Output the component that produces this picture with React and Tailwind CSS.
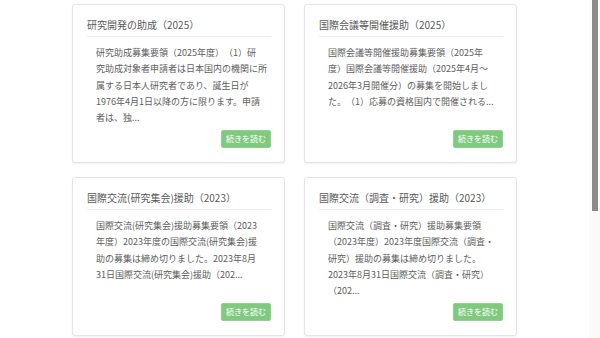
import React from "react";

const cards = [
  {
    title: "研究開発の助成（2025）",
    lines: [
      "研究助成募集要領（2025年度）（1）研",
      "究助成対象者申請者は日本国内の機関に所",
      "属する日本人研究者であり、誕生日が",
      "1976年4月1日以降の方に限ります。申請",
      "者は、独...",
    ],
  },
  {
    title: "国際会議等開催援助（2025）",
    lines: [
      "国際会議等開催援助募集要領（2025年",
      "度）国際会議等開催援助（2025年4月～",
      "2026年3月開催分）の募集を開始しまし",
      "た。（1）応募の資格国内で開催される...",
    ],
  },
  {
    title: "国際交流(研究集会)援助（2023）",
    lines: [
      "国際交流(研究集会)援助募集要領（2023",
      "年度）2023年度の国際交流(研究集会)援",
      "助の募集は締め切りました。2023年8月",
      "31日国際交流(研究集会)援助（202...",
    ],
  },
  {
    title: "国際交流（調査・研究）援助（2023）",
    lines: [
      "国際交流（調査・研究）援助募集要領",
      "（2023年度）2023年度国際交流（調査・",
      "研究）援助の募集は締め切りました。",
      "2023年8月31日国際交流（調査・研究）",
      "（202...",
    ],
  },
];

function Card({ title, lines }) {
  return (
    <div className="h-[159px] bg-white border border-[#e4e4e4] rounded-[3px] shadow-[0_1px_2px_rgba(0,0,0,0.06)] pl-[14px] pr-[13px] flex flex-col">
      <div className="pt-[13px] pb-[4px] border-b border-[#ececec] text-[10px] leading-[14px] text-[#5a5a5a] whitespace-nowrap">
        {title}
      </div>
      <div className="mt-[8px] pl-[9px] text-[9px] leading-[16.3px] text-[#606060] whitespace-nowrap">
        {lines.map((l, i) => (
          <div key={i}>{l}</div>
        ))}
      </div>
      <div className="mt-auto mb-[14px] flex justify-end">
        <button className="w-[50px] h-[18px] rounded-[2px] bg-[#80ca80] border border-[#8fd28f] text-white text-[8px] leading-[16px] text-center">
          続きを読む
        </button>
      </div>
    </div>
  );
}

export default function App() {
  return (
    <div
      className="flex w-[600px] h-[338px] overflow-hidden bg-white [text-spacing-trim:space-all]"
      style={{ fontFamily: '"Noto Sans CJK JP", "Noto Sans", sans-serif' }}
    >
      <div className="w-[589px] pl-[72px] pt-[4px]">
        <div className="grid grid-cols-[213px_213px] gap-x-[19px] gap-y-[14px]">
          {cards.map((c, i) => (
            <Card key={i} {...c} />
          ))}
        </div>
      </div>
      <div className="w-[11px] h-full bg-[#fafafa] pl-[3px] pr-[2px]">
        <div className="h-[211px] bg-[#8a8a8a]" />
      </div>
    </div>
  );
}
